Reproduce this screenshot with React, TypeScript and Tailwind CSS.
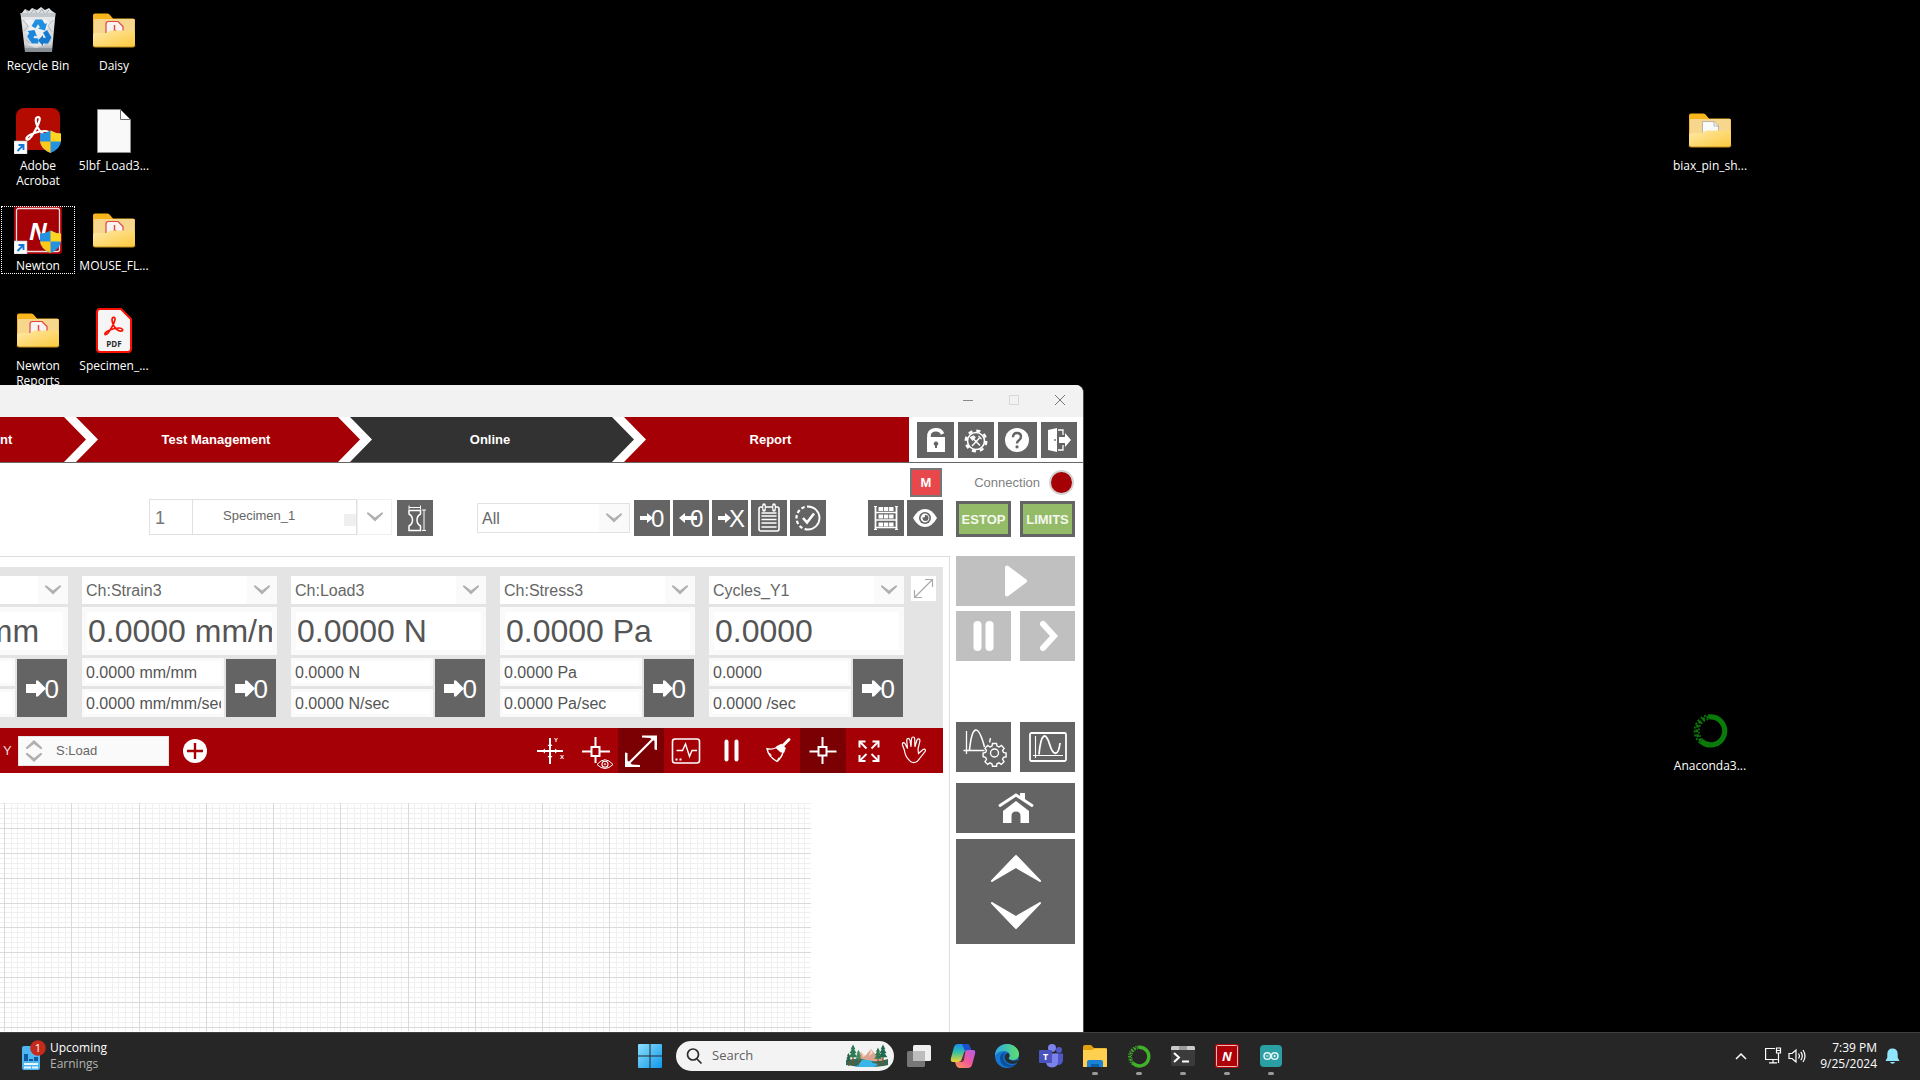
import React, { ReactNode } from "react";

/* ---------- desktop icons ---------- */

function RecycleBin() {
  return (
    <svg width="48" height="48" viewBox="0 0 48 48">
      <defs>
        <linearGradient id="bin" x1="0" y1="0" x2="0" y2="1">
          <stop offset="0" stopColor="#e9ebec" />
          <stop offset=".8" stopColor="#cfd2d5" />
          <stop offset="1" stopColor="#8b9096" />
        </linearGradient>
      </defs>
      <path d="M7 8l4-5 4 2 3-3 5 2 4-3 4 3 4-2 3 3 3 2-2 5H8z" fill="#dfe2e4" />
      <path d="M12 4l4 5 4-6 4 6 4-6 3 6 4-5" stroke="#a4abb0" strokeWidth="1" fill="none" />
      <path d="M6.500 7h35L38 46H11z" fill="url(#bin)" />
      <path d="M6.500 7h35l-.4 4H7z" fill="#b8bec3" opacity=".8" />
      <path d="M10 15l6 5-4 7 7 4-5 8 8 3 8-3 6-8-4-6 5-7-6-5-8 4-7-4z" fill="#fff" opacity=".5" />
      <path d="M9 14l5 6-4 5M39 14l-5 6 4 6M12 34l5 4M36 34l-4 5" stroke="#b4babf" fill="none" />
      <path d="M11 42h27l-.5 4h-26z" fill="#858b92" opacity=".8" />
      <path d="M17.500 20l4-6.500h6.500l3 4.500 2-1-2 7.500-7-2 2-1.300-2-3-2.500 4z" fill="#1f8fe0" />
      <path d="M13.500 25l7-1 2.500 6.500-2.300-1-1.400 2.500 5 .5v5h-6.500l-4.500-7 1.800-3.500z" fill="#1b86dc" />
      <path d="M33 24l4.500 7.500-3.500 6h-5V40l-5-5.500 5-5.500v2.700h3l-3-5z" fill="#1479d0" />
    </svg>
  );
}

function Folder({ kind }: { kind: "pdf" | "doc" }) {
  return (
    <svg width="48" height="48" viewBox="0 0 48 48">
      <defs>
        <linearGradient id="folderFront" x1="0" y1="0" x2="1" y2="1">
          <stop offset="0" stopColor="#ffe9a8" />
          <stop offset="1" stopColor="#fbc93d" />
        </linearGradient>
      </defs>
      <path d="M3 9.500Q3 7.500 5 7.500h12q1.500 0 2.500 1l3.500 4h20q2 0 2 2V36H3z" fill="#f8b51c" />
      <path d="M4 13h40.500v24H4z" fill="#f7d68d" />
      {kind === "pdf" ? (
        <g>
          <path d="M16 30V18q0-2.500 2.500-2.500H28l5 5V30z" fill="#f6f4f2" stroke="#e8433a" strokeWidth="1.200" />
          <path d="M24.500 19v5l-3 5M24.500 24l4 3" stroke="#e8433a" strokeWidth="1.400" fill="none" />
        </g>
      ) : (
        <g>
          <path d="M16.500 30V15.500H28l4.500 4.500v10z" fill="#fafafa" stroke="#a9a69c" strokeWidth=".8" />
          <path d="M28 15.500V20h4.500" fill="none" stroke="#a9a69c" strokeWidth=".8" />
        </g>
      )}
      <path d="M3 29q0-2 2-2h10.500q1.500 0 2.500-1l1-.8q1-.7 2.500-.7H43q2 0 2 2V39q0 2-2 2H5q-2 0-2-2z" fill="url(#folderFront)" />
      <path d="M3 39q0 2 2 2h38q2 0 2-2" stroke="#c98f1b" fill="none" />
    </svg>
  );
}

function AcrobatMark({ color }: { color: string }) {
  return (
    <path
      d="M24 11c-3.500 0-2.500 6 0 11 2 4 6 7 9.500 7 4 0 2.500-4-2.500-4-7 0-17 3.500-18.500 7-.8 2.500 2.500 2 4.500-1 3.500-5 7.500-12 8.500-16.500.6-2.500-.2-3.500-1.500-3.500z"
      fill="none"
      stroke={color}
      strokeWidth="2.200"
    />
  );
}

function ShieldAndArrow() {
  return (
    <g>
      <path d="M36.500 24.500q5 3 10.500 3v7q0 8-10.500 12.500Q26 42.500 26 34.500v-7q5.500 0 10.500-3z" fill="#2492e0" />
      <path d="M36.500 24.500q5 3 10.500 3V35.500H36.500z" fill="#ffd51f" />
      <path d="M36.500 35.500V47Q27 43 26 35.500z" fill="#ffc91a" />
      <path d="M0 35h13v13H0z" fill="#fdfdfd" stroke="#bcbcbc" strokeWidth=".6" />
      <path d="M3.500 45l5-5M4.500 39h5v5" stroke="#1279d8" strokeWidth="1.900" fill="none" />
    </g>
  );
}

function Acrobat() {
  return (
    <svg width="48" height="48" viewBox="0 0 48 48">
      <rect x="2" y="2" width="44" height="42" rx="8" fill="#b30b00" />
      <AcrobatMark color="#fff" />
      <ShieldAndArrow />
    </svg>
  );
}

function Newton() {
  return (
    <svg width="48" height="48" viewBox="0 0 48 48">
      <rect width="48" height="48" rx="3" fill="#a50005" />
      <rect x="2.500" y="2.500" width="43" height="43" rx="2" fill="none" stroke="#f0dcdc" strokeWidth="1.300" />
      <text x="24" y="34" textAnchor="middle" fontSize="24" fontWeight="700" fontStyle="italic" fontFamily="Open Sans, sans-serif" fill="#fff">N</text>
      <ShieldAndArrow />
    </svg>
  );
}

function BlankFile() {
  return (
    <svg width="48" height="48" viewBox="0 0 48 48">
      <path d="M7.500 3.500h23l10 10v33h-33z" fill="#f9f9f9" stroke="#8b8b8b" />
      <path d="M30.500 3.500v10h10z" fill="#fff" stroke="#6d6d6d" />
    </svg>
  );
}

function PdfFile() {
  return (
    <svg width="48" height="48" viewBox="0 0 48 48">
      <path d="M10 3h21l10 10v30q0 3-3 3H10q-3 0-3-3V6q0-3 3-3z" fill="#f5f5f5" stroke="#fa0f00" strokeWidth="2" />
      <g transform="translate(5.500 3) scale(.76)">
        <AcrobatMark color="#fa0f00" />
      </g>
      <text x="24" y="41" textAnchor="middle" fontSize="8" fontWeight="700" fontFamily="Open Sans, sans-serif" fill="#2c2c2c">PDF</text>
    </svg>
  );
}

function Anaconda({ size, color }: { size: number; color: string }) {
  return (
    <svg width={size} height={size} viewBox="0 0 48 48">
      <path d="M23 11a14 14 0 1 1-8 24" fill="none" stroke={color} strokeWidth="5.200" />
      <path d="M15 35a14 14 0 0 1 8-24" fill="none" stroke={color} strokeWidth="2.600" strokeDasharray="3 1.800" />
      <path d="M14 37a16 16 0 0 1 9-28" fill="none" stroke={color} strokeWidth="1.600" strokeDasharray="2.200 1.800" />
      <path d="M16.500 33.500a12 12 0 0 1 6.500-20.500" fill="none" stroke={color} strokeWidth="1.600" strokeDasharray="1.800 1.600" />
    </svg>
  );
}

function DesktopIcon({ place, label, children, focused }: { place: string; label: string; children: ReactNode; focused?: boolean }) {
  return (
    <button className={`absolute flex w-[76px] flex-col items-center pt-[6px] text-center ${place}`}>
      {focused && <span className="absolute inset-x-px top-[6px] h-[68px] border border-dotted border-white" />}
      {children}
      <span className="mt-[4px] w-[76px] text-[12px] leading-[15px] text-white">{label}</span>
    </button>
  );
}

/* ---------- shared window pieces ---------- */

function Chevron() {
  return (
    <svg width="16" height="10" viewBox="0 0 16 10">
      <path d="M0 .5h1.500L8 5.500l6.500-5H16v1.200L8 9.500 0 1.700z" fill="#b0b0b0" />
    </svg>
  );
}

function Picker({ label, value, className }: { label: string; value: string; className: string }) {
  return (
    <span className={`relative flex bg-white ${className}`}>
      <select aria-label={label} className="w-full appearance-none bg-transparent pt-[2px] pl-1 text-[16px] text-[#666]">
        <option>{value}</option>
      </select>
      <span className="pointer-events-none absolute inset-y-0 right-0 flex w-[30px] items-center justify-center bg-[#fafafa]">
        <Chevron />
      </span>
    </span>
  );
}

function Tile({ label, className, children }: { label: string; className: string; children: ReactNode }) {
  return (
    <button aria-label={label} className={`flex shrink-0 items-center justify-center text-white ${className}`}>
      {children}
    </button>
  );
}

function SmallZero({ variant }: { variant: "tare" | "untare" | "clear" }) {
  return (
    <svg width="36" height="36" viewBox="0 0 36 36" fill="#fff" fontFamily="Liberation Sans, Arial, sans-serif">
      {variant === "untare" ? (
        <path d="M6 18l6-5v3h12v4H12v3z" />
      ) : (
        <path d="M6 16h7v-3l6 5-6 5v-3H6z" />
      )}
      <text x="17" y="27" fontSize="24">{variant === "clear" ? "X" : "0"}</text>
    </svg>
  );
}

function BigZero() {
  return (
    <svg width="50" height="58" viewBox="0 0 50 58" fill="#fff" fontFamily="Liberation Sans, Arial, sans-serif">
      <path d="M9 25h10v-3.500h2l8 8-8 8h-2V34H9z" />
      <text x="27.500" y="39" fontSize="26">0</text>
    </svg>
  );
}

/* ---------- navigation ---------- */

function Step({ label, active, width, first, last }: { label: string; active?: boolean; width: string; first?: boolean; last?: boolean }) {
  const shape = first
    ? "[clip-path:polygon(0_0,calc(100%-22px)_0,100%_50%,calc(100%-22px)_100%,0_100%)]"
    : last
      ? "[clip-path:polygon(0_0,100%_0,100%_100%,0_100%,22px_50%)]"
      : "[clip-path:polygon(0_0,calc(100%-22px)_0,100%_50%,calc(100%-22px)_100%,0_100%,22px_50%)]";
  return (
    <button
      className={`h-[45px] text-[13px] font-bold text-white ${width} ${shape} ${active ? "bg-[#323232]" : "bg-[#a50005]"} ${first ? "text-left" : "-ml-[10px] text-center"} ${last ? "pl-[8px]" : first ? "" : "pr-[4px]"}`}
    >
      {label}
    </button>
  );
}

function HeaderIcons() {
  return (
    <div className="flex items-center gap-[4px] pl-[8px]">
      <Tile label="Unlock" className="h-[36px] w-[37px] bg-[#646464]">
        <svg width="36" height="36" viewBox="0 0 36 36">
          <path d="M11 15v-2.500a7 6 0 0 1 13.500-.5" fill="none" stroke="#fff" strokeWidth="3.600" />
          <path d="M9 15h18v15H9z" fill="#fff" />
          <path d="M18 19.500a2.200 2.200 0 0 1 1 4.200V26h-2v-2.300a2.200 2.200 0 0 1 1-4.200z" fill="#646464" />
        </svg>
      </Tile>
      <Tile label="Settings" className="h-[36px] w-[36px] bg-[#646464]">
        <svg width="36" height="36" viewBox="0 0 36 36" fill="none" stroke="#fff">
          <circle cx="18" cy="19" r="8.500" strokeWidth="1.600" />
          <circle cx="18" cy="19" r="10.300" strokeWidth="2.400" strokeDasharray="4.090 4" />
          <path d="M14 24l7.500-8M14.500 16l7.500 7.500" strokeWidth="1.500" />
          <path d="M12.500 15.500l3-1.500 1.500 1.500-2.500 2.500zM20.500 14l3 3" strokeWidth="1.200" fill="#fff" />
        </svg>
      </Tile>
      <Tile label="Help" className="h-[36px] w-[39px] bg-[#646464]">
        <svg width="26" height="26" viewBox="0 0 26 26">
          <circle cx="12" cy="13" r="12" fill="#fff" />
          <path d="M8 10.200Q8 6 12 6t4 3.800q0 2-2 3.400-2 1.300-2 3.300" fill="none" stroke="#646464" strokeWidth="2.400" />
          <circle cx="12" cy="19.800" r="1.600" fill="#646464" />
        </svg>
      </Tile>
      <Tile label="Exit" className="h-[36px] w-[36px] bg-[#646464]">
        <svg width="36" height="36" viewBox="0 0 36 36">
          <path d="M7 8l9-2v24l-9-2z" fill="#fff" />
          <path d="M17 8h5v5M17 28h5v-5" fill="none" stroke="#fff" strokeWidth="1.300" />
          <path d="M18 15h6v-4l6 7-6 7v-4h-6z" fill="#fff" />
          <circle cx="14" cy="18" r=".9" fill="#646464" />
        </svg>
      </Tile>
    </div>
  );
}

/* ---------- channel read-outs ---------- */

const channels = [
  { name: "Ch:Position3", value: "0.0000 mm", rate: "0.0000 mm" },
  { name: "Ch:Strain3", value: "0.0000 mm/mm", rate: "0.0000 mm/mm/sec" },
  { name: "Ch:Load3", value: "0.0000 N", rate: "0.0000 N/sec" },
  { name: "Ch:Stress3", value: "0.0000 Pa", rate: "0.0000 Pa/sec" },
  { name: "Cycles_Y1", value: "0.0000", rate: "0.0000 /sec" },
];

function Channel({ name, value, rate }: { name: string; value: string; rate: string }) {
  const small = "h-[28px] w-full border-[3px] border-[#fafafa] bg-white pt-px pl-px text-[16px] text-[#555]";
  return (
    <div className="flex w-[195px] shrink-0 flex-col gap-[3px]">
      <Picker label="Channel" value={name} className="h-[28px]" />
      <input readOnly aria-label={`${name} value`} value={value} className="h-[48px] w-full border-[5px] border-[#fafafa] bg-white pl-px text-[32px] leading-[36px] text-[#555]" />
      <div className="flex gap-[2px]">
        <div className="flex w-[142px] flex-col gap-[3px]">
          <input readOnly aria-label={`${name} peak`} value={value} className={small} />
          <input readOnly aria-label={`${name} rate`} value={rate} className={small} />
        </div>
        <Tile label={`Zero ${name}`} className="mt-px h-[58px] w-[50px] bg-[#646464]">
          <BigZero />
        </Tile>
      </div>
    </div>
  );
}

/* ---------- chart toolbar ---------- */

const Ico = ({ children }: { children: ReactNode }) => (
  <svg width="44" height="44" viewBox="0 0 44 44" fill="none" stroke="#fff" strokeWidth="2">
    {children}
  </svg>
);

const chartTools: { label: string; on?: boolean; icon: ReactNode }[] = [
  {
    label: "Axes cursor",
    icon: (
      <Ico>
        <path d="M22 9v26M9 22h26" />
        <path d="M19.500 17h5l-2.500-3zM19.500 27h5L22 30zM17 19.500v5L14 22zM27 19.500v5l3-2.500z" fill="#fff" stroke="none" />
        <g stroke="none" fill="#fff" fontSize="6" fontWeight="700" fontFamily="Liberation Sans, sans-serif">
          <text x="26" y="13">Y</text>
          <text x="32" y="30">X</text>
        </g>
      </Ico>
    ),
  },
  {
    label: "Cursor view",
    icon: (
      <Ico>
        <path d="M22.500 8v10M22.500 27v7M9 22.500h9M27 22.500h10" />
        <path d="M18.500 18h8v9h-8z" />
        <path d="M24 35.500q8-9.500 16 0-8 8-16 0z" strokeWidth="1" />
        <circle cx="32" cy="35.200" r="3" strokeWidth="1.100" />
        <circle cx="32" cy="35.200" r=".7" strokeWidth=".8" />
      </Ico>
    ),
  },
  {
    label: "Autoscale",
    on: true,
    icon: (
      <Ico>
        <path d="M9 35L35 9" strokeWidth="2.200" />
        <path d="M23 6.500h15V21l-2.500-.500V12L31 9l-8-.500zM6 23.500v14.500h15v-2l-8-.500-4.500-4L8.500 24z" fill="#fff" stroke="none" />
      </Ico>
    ),
  },
  {
    label: "Monitor",
    icon: (
      <Ico>
        <rect x="8.500" y="10" width="27" height="24" rx="2.500" strokeWidth="1.600" />
        <path d="M12.500 21.500h6l3-6.500 4 12.500 2.500-6h5" strokeWidth="1.400" />
        <path d="M11.500 30.500h2M15.500 30.500h2" />
      </Ico>
    ),
  },
  {
    label: "Pause chart",
    icon: (
      <Ico>
        <path d="M16.500 12.500v18M26.500 12.500v18" strokeWidth="4" strokeLinecap="round" />
      </Ico>
    ),
  },
  {
    label: "Clear chart",
    icon: (
      <Ico>
        <path d="M33 10.500l-5.500 5.500" strokeWidth="3" strokeLinecap="round" />
        <path d="M20.500 17.500l5-2.500 4 4-1.500 4.500-3.500-.5-4-3.500z" fill="#fff" strokeWidth=".6" />
        <path d="M20.500 18.500q-4.500 2.500-9.500 1.200 1.500 8.300 10 12.800 5-4.500 6-9.500" strokeWidth="1.400" />
        <path d="M13.500 24l2 2.500M21 32l2-3.500" strokeWidth="1" />
      </Ico>
    ),
  },
  {
    label: "Crosshair",
    on: true,
    icon: (
      <Ico>
        <path d="M21.500 8v10M21.500 27v8M8.500 22.500h9M26 22.500h9.500" />
        <path d="M17.500 18h8v8.500h-8z" />
      </Ico>
    ),
  },
  {
    label: "Fit",
    icon: (
      <Ico>
        <path d="M12.500 18.500v-6h6M25.500 12.500h6v6M31.500 26v6h-6M18.500 32h-6v-6" strokeWidth="2" />
        <path d="M13 13l6.500 6.500M31 13l-6.500 6.500M31 31.500L24.500 25M13 31.500l6.500-6.500" strokeWidth="1.800" />
      </Ico>
    ),
  },
  {
    label: "Pan",
    icon: (
      <Ico>
        <path
          d="M17 31q-4-4-4.500-9.500l-2-5.500q-.5-2 1-2.300 1.200 0 2 1.800l2 4-.8-8q0-2 1.500-2.200 1.500 0 1.800 2l1 6.500.5-8q.3-1.800 1.700-1.800t1.500 1.800l.2 8 2-6.500q.5-1.800 2-1.400 1.300.5 1 2.200L26 20l.5 4.500 4.500-4q1.500-.8 2.300.2.500 1-.5 2.100L28 29q-3 5-7 4.500-2.500-.2-4-2.500z"
          strokeWidth="1.200"
        />
      </Ico>
    ),
  },
];

function ChartGrid() {
  const width = 811;
  const height = 228;
  const cols = Array.from({ length: 121 }, (_, i) => ({ at: Math.round(4 + i * 6.725), major: i % 10 === 0 })).filter((l) => l.at < width);
  const rows = Array.from({ length: 46 }, (_, i) => ({ at: Math.round(i * 4.975), major: i % 5 === 0 && i > 0 })).filter((l) => l.at < height);
  return (
    <svg width={width} height={height} viewBox={`0 0 ${width} ${height}`}>
      {[false, true].map((major) => (
        <g key={String(major)} fill={major ? "#dadada" : "#f0f0f0"}>
          {cols.filter((l) => l.major === major).map((l) => (
            <rect key={`c${l.at}`} x={l.at} y="0" width="1" height={height} />
          ))}
          {rows.filter((l) => l.major === major).map((l) => (
            <rect key={`r${l.at}`} x="0" y={l.at} width={width} height="1" />
          ))}
        </g>
      ))}
    </svg>
  );
}

/* ---------- right hand control column ---------- */

function Controls() {
  return (
    <div className="flex flex-1 flex-col border-l border-[#dedede] pr-[8px] pl-[6px]">
      <Tile label="Play" className="h-[50px] w-full bg-[#c0c0c0]">
        <svg width="30" height="34" viewBox="0 0 30 34">
          <path d="M6 3.500v27L24 17z" fill="#fff" stroke="#fff" strokeWidth="4" strokeLinejoin="round" />
        </svg>
      </Tile>
      <div className="mt-[5px] flex justify-between">
        <Tile label="Pause" className="h-[50px] w-[55px] bg-[#c0c0c0]">
          <svg width="24" height="32" viewBox="0 0 24 32" stroke="#fff" strokeWidth="8" strokeLinecap="round">
            <path d="M5.500 5v22M17.500 5v22" />
          </svg>
        </Tile>
        <Tile label="Next" className="h-[50px] w-[55px] bg-[#c0c0c0]">
          <svg width="24" height="32" viewBox="0 0 24 32" stroke="#fff" strokeWidth="6" strokeLinecap="round" fill="none">
            <path d="M7 4l11 12L7 28" />
          </svg>
        </Tile>
      </div>
      <div className="mt-[61px] flex justify-between">
        <Tile label="Graph settings" className="h-[50px] w-[55px] bg-[#646464]">
          <svg width="50" height="44" viewBox="0 0 50 44" fill="none" stroke="#fff">
            <path d="M7.500 6v23M4.500 25.500h21" strokeWidth="1.300" />
            <path d="M10.500 25C13 0 19-2 25.500 22" strokeWidth="1.600" />
            <circle cx="35.500" cy="28" r="4" strokeWidth="1.400" />
            <path d="M33.500 18.500h4l.6 2.600 2 .9 2.300-1.500 2.700 2.800-1.500 2.200.9 2 2.600.5v3.800l-2.600.5-.9 2 1.400 2.400-2.700 2.700-2.300-1.500-2 .9-.5 2.500h-4l-.6-2.500-2-.9-2.200 1.500-2.700-2.700 1.500-2.400-1-2-2.400-.5v-3.800l2.500-.5.9-2-1.500-2.200 2.700-2.800 2.300 1.500 2-.9zM31.500 13l-1 4.500" strokeWidth="1.400" />
          </svg>
        </Tile>
        <Tile label="Graph" className="h-[50px] w-[55px] bg-[#646464]">
          <svg width="42" height="34" viewBox="0 0 42 34" fill="none" stroke="#fff">
            <rect x="3" y="3" width="36" height="28" rx="1.500" strokeWidth="1.800" />
            <path d="M8.500 6v22M6 25.500h30" strokeWidth="1.100" />
            <path d="M12 24.500C14 2 19 2 22.500 14c4 13 9 12 10.500-1" strokeWidth="1.800" />
          </svg>
        </Tile>
      </div>
      <Tile label="Home" className="mt-[11px] h-[50px] w-full bg-[#646464]">
        <svg width="36" height="34" viewBox="0 0 36 34" fill="#fff">
          <path d="M18 10l13 10v12h-8.500v-7q0-4.500-4.500-4.500t-4.500 4.500v7H5V20z" />
          <path d="M2 14.500L18 4l16 10.500" fill="none" stroke="#fff" strokeWidth="2.800" strokeLinecap="round" />
          <path d="M22 2h5v8l-5-3z" />
        </svg>
      </Tile>
      <div className="mt-[6px] flex h-[105px] flex-col items-center justify-center gap-[18px] bg-[#646464]">
        <button aria-label="Jog up">
          <svg width="52" height="29" viewBox="0 0 52 29">
            <path d="M26 2L2 27l24-14 24 14z" fill="#fff" stroke="#fff" strokeWidth="2" strokeLinejoin="round" />
          </svg>
        </button>
        <button aria-label="Jog down">
          <svg width="52" height="29" viewBox="0 0 52 29">
            <path d="M26 27L2 2l24 14L50 2z" fill="#fff" stroke="#fff" strokeWidth="2" strokeLinejoin="round" />
          </svg>
        </button>
      </div>
    </div>
  );
}

/* ---------- application window ---------- */

function Toolbar() {
  const small = "h-[36px] w-[36px] bg-[#646464]";
  return (
    <div className="h-[93px] pt-[5px]">
      <div className="flex justify-end pr-[7px]">
        <button className="h-[29px] w-[32px] border-2 border-[#777] bg-[#e8484c] text-[13px] font-bold text-white">M</button>
      </div>
      <div className="mt-[3px] flex items-center pr-[6px] pl-[149px]">
        <input readOnly aria-label="Specimen number" value="1" className="-mt-[2px] h-[36px] w-[44px] border border-[#e0e0e0] bg-white pt-[2px] pl-[5px] text-[18px] text-[#777]" />
        <div className="relative -mt-[2px] -ml-px">
          <input readOnly aria-label="Specimen name" value="Specimen_1" className="h-[36px] w-[165px] border border-[#e0e0e0] bg-white pb-[3px] pl-[30px] text-[13px] text-[#666]" />
          <span className="absolute right-px bottom-[9px] h-[12px] w-[12px] bg-[#efefef]" />
        </div>
        <Tile label="Specimen list" className="-mt-[2px] h-[36px] w-[35px] border border-[#f0f0f0] bg-white">
          <Chevron />
        </Tile>
        <Tile label="Specimen geometry" className={`ml-[5px] ${small}`}>
          <svg width="36" height="36" viewBox="0 0 36 36" fill="none" stroke="#fff" strokeWidth="1">
            <path d="M12 10.500h11.500V14q-3.500 2-3.500 6t3.500 6v4.500H12V26q3.500-2 3.500-6T12 14z" strokeWidth="1.500" />
            <path d="M12 7.500h11.500M12 5.500v4M23.500 5.500v4M27 10v20M25 10h4M25 30.500h4" />
          </svg>
        </Tile>
        <Picker label="Filter" value="All" className="ml-[44px] h-[30px] w-[153px] border border-[#e2e2e2]" />
        <div className="ml-[4px] flex gap-[3px]">
          <Tile label="Tare" className={small}><SmallZero variant="tare" /></Tile>
          <Tile label="Remove tare" className={small}><SmallZero variant="untare" /></Tile>
          <Tile label="Clear" className={small}><SmallZero variant="clear" /></Tile>
          <Tile label="Log" className={small}>
            <svg width="36" height="36" viewBox="0 0 36 36" fill="none" stroke="#fff">
              <rect x="8" y="7" width="20" height="24" rx="2" strokeWidth="1.600" />
              <path d="M13 5v5M23 5v5" strokeWidth="3.600" strokeLinecap="round" />
              <path d="M13 5.500v4M23 5.500v4" stroke="#646464" strokeWidth="1.400" />
              <path d="M10.500 13h15M10.500 16h15M10.500 19.500h15M10.500 23h15M10.500 27h15" strokeWidth="1.500" />
            </svg>
          </Tile>
          <Tile label="Approve" className={small}>
            <svg width="36" height="36" viewBox="0 0 36 36" fill="none" stroke="#fff">
              <path d="M18 6.500a11.500 11.500 0 0 1 0 23" strokeWidth="1.800" />
              <path d="M18 29.500a11.500 11.500 0 0 1 0-23" strokeWidth="2.200" strokeDasharray="3.500 2.300" />
              <path d="M13 18l4 4.500 7-9" strokeWidth="2.600" />
            </svg>
          </Tile>
        </div>
        <div className="ml-auto flex gap-[3px]">
          <Tile label="Rack" className={small}>
            <svg width="36" height="36" viewBox="0 0 36 36" fill="none" stroke="#fff">
              <path d="M7.500 6v24M28.500 6v24" strokeWidth="1.800" />
              <path d="M6 6.500h3M27 6.500h3M6 29.500h3M27 29.500h3" strokeWidth="1.200" />
              <path d="M8 12.500h20M8 20h20M8 27.500h20" strokeWidth="1.500" />
              <path d="M10.500 9h15M10.500 16.500h15M10.500 24.500h15" strokeWidth="4" strokeDasharray="4.500 .8" />
            </svg>
          </Tile>
          <Tile label="Show" className={small}>
            <svg width="36" height="36" viewBox="0 0 36 36">
              <path d="M6 18Q11 9 18 9t12 9q-5 9-12 9T6 18z" fill="#fff" />
              <circle cx="18" cy="18" r="6" fill="#646464" />
              <circle cx="18" cy="18" r="4.400" fill="#fff" />
              <circle cx="18.500" cy="18" r="3" fill="#646464" />
              <circle cx="16.500" cy="16" r="1.500" fill="#fff" />
            </svg>
          </Tile>
        </div>
      </div>
    </div>
  );
}

function ChartBar() {
  return (
    <div className="mr-[6px] flex h-[45px] items-center bg-[#a50005]">
      <label htmlFor="y-axis" className="w-[18px] pl-[3px] text-[13px] text-[#f2dada]">Y</label>
      <div className="flex h-[30px] w-[151px] items-center border border-[#e6e6e6] bg-[#fafafa] pl-[7px]">
        <svg width="16" height="22" viewBox="0 0 16 22" fill="#b0b0b0">
          <path d="M8 0l8 7.500V9h-1.500L8 4 1.500 9H0V7.500zM8 22l8-7.500V13h-1.500L8 18l-6.500-5H0v1.500z" />
        </svg>
        <input id="y-axis" readOnly value="S:Load" className="ml-[14px] w-[100px] bg-transparent pt-px text-[13px] text-[#666]" />
      </div>
      <button aria-label="Add axis" className="ml-[13px]">
        <svg width="26" height="26" viewBox="0 0 26 26">
          <circle cx="13" cy="13" r="12" fill="#fff" />
          <path d="M13 5v16M5 13h16" stroke="#a50005" strokeWidth="2.400" />
        </svg>
      </button>
      <div className="mr-[6px] ml-auto grid w-[410px] grid-cols-9">
        {chartTools.map((t) => (
          <button key={t.label} aria-label={t.label} className={`flex h-[45px] items-center justify-center ${t.on ? "bg-[#7b0003]" : ""}`}>
            {t.icon}
          </button>
        ))}
      </div>
    </div>
  );
}

function AppWindow() {
  return (
    <section className="absolute top-[385px] bottom-0 left-0 flex w-[1084px] flex-col overflow-hidden rounded-tr-[8px] border-r border-[#4a4a4a] bg-white font-['Liberation_Sans',Arial,sans-serif]">
      <header className="flex h-[32px] shrink-0 justify-end bg-[#f2f2f2] pb-[2px]">
        <button aria-label="Minimize" className="flex w-[46px] items-center justify-center">
          <svg width="10" height="10"><path d="M0 5.500h10" stroke="#888" /></svg>
        </button>
        <button aria-label="Maximize" className="flex w-[46px] items-center justify-center">
          <svg width="10" height="10"><rect x=".5" y=".5" width="9" height="9" fill="none" stroke="#d8d8d8" /></svg>
        </button>
        <button aria-label="Close" className="flex w-[46px] items-center justify-center">
          <svg width="10" height="10"><path d="M0 0l10 10M10 0L0 10" stroke="#777" /></svg>
        </button>
      </header>
      <nav className="flex h-[46px] shrink-0 border-b border-[#666]">
        <Step label="nt" width="w-[86px]" first />
        <Step label="Test Management" width="w-[284px]" />
        <Step label="Online" width="w-[284px]" active />
        <Step label="Report" width="w-[285px]" last />
        <HeaderIcons />
      </nav>
      <div className="flex min-h-0 flex-1">
        <main className="flex min-w-0 flex-1 flex-col">
          <Toolbar />
          <div className="border-t border-[#dedede] pt-[10px] pr-[6px]">
            <div className="flex items-start overflow-hidden bg-[#e4e4e4] pt-[9px] pb-[11px]">
              <div className="-ml-[127px] flex gap-[14px]">
                {channels.map((c) => (
                  <Channel key={c.name} {...c} />
                ))}
              </div>
              <Tile label="Expand channels" className="ml-[7px] h-[25px] w-[25px] bg-white">
                <svg width="21" height="21" viewBox="0 0 21 21" fill="none" stroke="#a8a8a8">
                  <path d="M2 19L19 2M12 1.500h7.500V9M1.500 12v7.500H9" strokeWidth="1.200" />
                </svg>
              </Tile>
            </div>
          </div>
          <ChartBar />
          <div className="min-h-0 flex-1 overflow-hidden pt-[30px]">
            <ChartGrid />
          </div>
        </main>
        <aside className="flex w-[134px] flex-col">
          <div className="h-[93px] pt-[6px] pr-[8px] pl-[7px]">
            <div className="flex h-[26px] items-center justify-end gap-[9px] pr-px">
              <span className="pt-px text-[13px] text-[#808080]">Connection</span>
              <span className="h-[25px] w-[25px] rounded-full border-2 border-[#d2d2d2] bg-[#a50005]" />
            </div>
            <div className="mt-[6px] flex justify-between">
              <button className="h-[36px] w-[55px] border-[3px] border-[#646464] bg-[#94bb67] pt-px text-[13px] font-bold text-[#f4f8ee]">ESTOP</button>
              <button className="h-[36px] w-[55px] border-[3px] border-[#646464] bg-[#94bb67] pt-px text-[13px] font-bold text-[#f4f8ee]">LIMITS</button>
            </div>
          </div>
          <Controls />
        </aside>
      </div>
    </section>
  );
}

/* ---------- taskbar ---------- */

function TaskButton({ label, running, children }: { label: string; running?: boolean; children: ReactNode }) {
  return (
    <button aria-label={label} className="relative flex h-[47px] w-[44px] items-center justify-center">
      {children}
      {running && <span className="absolute bottom-[4px] h-[3px] w-[6px] rounded-full bg-[#9a9a9a]" />}
    </button>
  );
}

function SearchArt() {
  const tree = (x: number, y: number, s: number, c: string) => (
    <g transform={`translate(${x} ${y}) scale(${s})`}>
      <path d="M-.8 0h1.600v24h-1.600z" fill="#8a4b2a" />
      <path d="M0-2l3 6H1.500l3 5H2l3.500 5h-11L-2 9h-2.500l3-5H-3z" fill={c} />
    </g>
  );
  return (
    <svg width="42" height="24" viewBox="0 0 42 24">
      <path d="M8 17l7-9 4 4 6-7 5 6 4-2 4 8z" fill="#dba58f" />
      <path d="M15 8l2 5 2-1zM25 5l-2 7 4-3z" fill="#f4d5c4" />
      <path d="M0 17q10-4 20-1t22-1v6q-8 2-20 2T0 21z" fill="#2f6b55" />
      <path d="M16 16h8l3 3 6 1-5 3H9l4-3z" fill="#38b6e8" />
      {tree(7, 2, 0.8, "#2f7a55")}
      {tree(12.500, 7, 0.6, "#3d8a5c")}
      {tree(2.500, 10, 0.5, "#276048")}
      {tree(32, 5, 0.7, "#2f7a55")}
      {tree(37, 2, 0.8, "#1f6b50")}
    </svg>
  );
}

function Taskbar() {
  return (
    <footer className="relative flex h-[48px] shrink-0 items-center justify-between border-t border-[#404040] bg-[#262626] pb-[2px] text-white">
      <button className="flex items-center gap-[4px] pl-[21px] text-left">
        <svg width="25" height="32" viewBox="0 0 25 32">
          <rect x="1" y="6" width="18" height="24" rx="2" fill="#4db5f0" />
          <path d="M3 14h4v7H3zM8 19h4v2H8zM13 17h4v4h-4z" fill="#0d5aa0" />
          <path d="M3 23h14v2H3zM3 26.500h7v2H3zM11 26.500h6v2h-6z" fill="#e8f6ff" />
          <circle cx="17" cy="8" r="7.800" fill="#c42b1c" />
          <text x="17" y="12" textAnchor="middle" fontSize="11" fill="#fff">1</text>
        </svg>
        <span className="text-[12px] leading-[16px]">
          <span className="block">Upcoming</span>
          <span className="block text-[#b4b4b4]">Earnings</span>
        </span>
      </button>
      <div className="absolute top-0 bottom-[2px] left-[628px] flex items-center">
        <TaskButton label="Start">
          <svg width="24" height="24" viewBox="0 0 24 24">
            <defs>
              <linearGradient id="win" x1="0" y1="0" x2="1" y2="1">
                <stop offset="0" stopColor="#8be0fb" />
                <stop offset="1" stopColor="#0f97ec" />
              </linearGradient>
            </defs>
            <path d="M0 1q0-1 1-1h10.500v11.500H0zM12.500 0H23q1 0 1 1v10.500H12.500zM0 12.500h11.500V24H1q-1 0-1-1zM12.500 12.500H24V23q0 1-1 1H12.500z" fill="url(#win)" />
          </svg>
        </TaskButton>
        <label className="mr-[3px] ml-[4px] flex h-[30px] w-[218px] items-center rounded-full bg-[#f3f3f3] pr-[6px] pl-[9px]">
          <svg width="18" height="18" viewBox="0 0 18 18" fill="none" stroke="#2b2b2b" strokeWidth="1.700">
            <circle cx="8" cy="7.500" r="5.500" />
            <path d="M12 12l4.500 4.500" />
          </svg>
          <input placeholder="Search" aria-label="Search" className="ml-[9px] w-[134px] bg-transparent text-[13px] placeholder:text-[#606060]" />
          <SearchArt />
        </label>
        <TaskButton label="Task view">
          <svg width="24" height="24" viewBox="0 0 24 24">
            <rect x="6" y="1" width="18" height="16" rx="1.500" fill="#efefef" />
            <rect x="0" y="7" width="18" height="16" rx="1.500" fill="#777" />
            <path d="M6 7h12v10H6z" fill="#bdbdbd" />
          </svg>
        </TaskButton>
        <TaskButton label="Copilot">
          <svg width="26" height="26" viewBox="0 0 26 26">
            <defs>
              <linearGradient id="copA" x1="0" y1="0" x2="0" y2="1">
                <stop offset="0" stopColor="#1a8df0" />
                <stop offset=".45" stopColor="#2fc0a8" />
                <stop offset="1" stopColor="#f6d22c" />
              </linearGradient>
              <linearGradient id="copB" x1="1" y1="0" x2="0" y2="1">
                <stop offset="0" stopColor="#b05cf0" />
                <stop offset=".5" stopColor="#f2589a" />
                <stop offset="1" stopColor="#fb9a4c" />
              </linearGradient>
            </defs>
            <path d="M8 1h9q2 0 3 3l1 3h-4q-2 0-3 3l-2 6q-1 3-4 3H3q-3 0-2-4L4 4q1-3 4-3z" fill="url(#copA)" />
            <path d="M12 1h5q2 0 3 3l1 3h-4l-2 1z" fill="#1c4fd0" />
            <path d="M18 25H9q-2 0-3-3l-1-3h4q2 0 3-3l2-6q1-3 4-3h5q3 0 2 4l-3 11q-1 3-4 3z" fill="url(#copB)" />
            <path d="M11.500 17l3-8.500L15.500 8l-1.500 9q-.5 2-2.500 2h-2q1.500-.3 2-2z" fill="#262626" opacity=".75" />
          </svg>
        </TaskButton>
        <TaskButton label="Edge">
          <svg width="24" height="24" viewBox="0 0 24 24">
            <defs>
              <linearGradient id="edgeA" x1="0" y1="0" x2="1" y2="0">
                <stop offset="0" stopColor="#2aa8e8" />
                <stop offset="1" stopColor="#5fe06a" />
              </linearGradient>
            </defs>
            <circle cx="12" cy="12" r="12" fill="#1577cf" />
            <path d="M0 12C0 4 6 0 12 0c7 0 12 5 12 10 0 4-3 6-6.500 6-3 0-4.500-1.200-3.500-2.500C16 10 13 7 9 7c-5 0-8 3-9 5z" fill="url(#edgeA)" />
            <path d="M9 22q-4-3-4-8t6-6q-4 3-2 8 2.500 5 8 5 3 0 5-2-4 6-13 3z" fill="#0c4f9c" />
            <path d="M14 13.500q1.500-2-.5-4.500-4 0-4 4.500 1 6.500 8 6.500 3 0 5-2 1-2-.5-2-5 2-8-1-.7-.8 0-1.500z" fill="#262626" opacity=".9" />
          </svg>
        </TaskButton>
        <TaskButton label="Teams">
          <svg width="25" height="24" viewBox="0 0 25 24">
            <circle cx="20" cy="6" r="3" fill="#5058c8" />
            <circle cx="13" cy="4" r="4" fill="#7b83eb" />
            <path d="M16 9.500h8v7q-1 4.500-5 4.500t-4-3z" fill="#5058c8" />
            <path d="M7 9.500h12V17q0 6.500-6 6.500T7 17z" fill="#7b83eb" />
            <rect x="0" y="6" width="13" height="13" rx="1" fill="#4a52bd" />
            <text x="6.500" y="16" textAnchor="middle" fontSize="9" fontWeight="700" fill="#fff">T</text>
          </svg>
        </TaskButton>
        <TaskButton label="File Explorer" running>
          <svg width="24" height="22" viewBox="0 0 24 22">
            <path d="M0 2q0-2 2-2h6l3 3h11q2 0 2 2v4H0z" fill="#e0a010" />
            <path d="M0 5h9l2-1.500h13V22H0z" fill="#ffd04f" />
            <path d="M4 22v-5q0-2 2-2h12q2 0 2 2v5z" fill="#1b81d4" />
            <path d="M8 19h8v3H8z" fill="#0d5fa8" />
          </svg>
        </TaskButton>
        <TaskButton label="Anaconda" running>
          <Anaconda size={32} color="#43b02a" />
        </TaskButton>
        <TaskButton label="Terminal" running>
          <svg width="24" height="20" viewBox="0 0 24 20">
            <rect width="24" height="20" rx="1.500" fill="#3b3b3b" />
            <path d="M0 1.500Q0 0 1.500 0h21Q24 0 24 1.500V4H0z" fill="#c9c9c9" />
            <path d="M8 0h8v4H8z" fill="#999" />
            <path d="M3 7l5 4.500L3 16M11 15.500h7" fill="none" stroke="#fff" strokeWidth="2" />
          </svg>
        </TaskButton>
        <TaskButton label="Newton" running>
          <svg width="24" height="24" viewBox="0 0 24 24">
            <rect width="24" height="24" rx="1.500" fill="#b00008" />
            <rect x="1.500" y="1.500" width="21" height="21" rx="1" fill="none" stroke="#e8b8b8" />
            <text x="12" y="17" textAnchor="middle" fontSize="13" fontWeight="700" fontStyle="italic" fill="#fff">N</text>
          </svg>
        </TaskButton>
        <TaskButton label="Arduino" running>
          <svg width="22" height="22" viewBox="0 0 22 22">
            <rect width="22" height="22" rx="4" fill="#2a9fa4" />
            <g fill="none" stroke="#e4f5f5" strokeWidth="1.500">
              <circle cx="7.300" cy="11" r="3.300" />
              <circle cx="14.700" cy="11" r="3.300" />
              <path d="M6 11h2.600M13.400 11h2.600M14.700 9.700v2.600" strokeWidth="1" />
            </g>
          </svg>
        </TaskButton>
      </div>
      <div className="flex items-center pr-[20px]">
        <button aria-label="Show hidden icons">
          <svg width="12" height="8" viewBox="0 0 12 8"><path d="M1 7l5-5 5 5" fill="none" stroke="#fff" strokeWidth="1.500" /></svg>
        </button>
        <button aria-label="Network" className="ml-[17px]">
          <svg width="18" height="17" viewBox="0 0 18 17" fill="none" stroke="#fff" strokeWidth="1.200">
            <path d="M11 1.500H1.600v11h12M5 15.900h8M9 12.500v3M12.500 1h4v5h-4zM12.500 3.500h4M14.500 6v10" />
          </svg>
        </button>
        <button aria-label="Volume" className="ml-[6px]">
          <svg width="18" height="16" viewBox="0 0 18 16" fill="none" stroke="#fff" strokeWidth="1.200">
            <path d="M1 5.500h3L8 2v12l-4-3.500H1zM10.500 5.500q1.800 2.500 0 5M12.800 3.800q3 4.200 0 8.400M15 2q4 6 0 12" />
          </svg>
        </button>
        <button className="ml-[11px] w-[60px] text-right text-[12px] leading-[16px] whitespace-nowrap">
          <span className="block">7:39 PM</span>
          <span className="flex justify-end">9/25/2024</span>
        </button>
        <button aria-label="Notifications" className="ml-[8px]">
          <svg width="15" height="16" viewBox="0 0 15 16" fill="#90e6fc">
            <path d="M7.500.5q5 0 5.200 5.500v3.500l1.800 3.500H.5l1.800-3.500V6Q2.500.5 7.500.5zM5 14h5q-.5 1.800-2.500 1.800T5 14z" />
          </svg>
        </button>
      </div>
    </footer>
  );
}

export default function App() {
  return (
    <div className="flex h-screen flex-col overflow-hidden bg-black font-['Open_Sans','Noto_Sans',sans-serif]">
      <div className="relative min-h-0 flex-1">
        <DesktopIcon place="left-0 top-0" label="Recycle Bin"><RecycleBin /></DesktopIcon>
        <DesktopIcon place="left-[76px] top-0" label="Daisy"><Folder kind="pdf" /></DesktopIcon>
        <DesktopIcon place="left-0 top-[100px]" label="Adobe Acrobat"><Acrobat /></DesktopIcon>
        <DesktopIcon place="left-[76px] top-[100px]" label="5lbf_Load3..."><BlankFile /></DesktopIcon>
        <DesktopIcon place="left-0 top-[200px]" label="Newton" focused><Newton /></DesktopIcon>
        <DesktopIcon place="left-[76px] top-[200px]" label="MOUSE_FL..."><Folder kind="pdf" /></DesktopIcon>
        <DesktopIcon place="left-0 top-[300px]" label="Newton Reports"><Folder kind="pdf" /></DesktopIcon>
        <DesktopIcon place="left-[76px] top-[300px]" label="Specimen_..."><PdfFile /></DesktopIcon>
        <DesktopIcon place="right-[172px] top-[100px]" label="biax_pin_sh..."><Folder kind="doc" /></DesktopIcon>
        <DesktopIcon place="right-[172px] top-[700px]" label="Anaconda3..."><Anaconda size={48} color="#0a7a0a" /></DesktopIcon>
        <AppWindow />
      </div>
      <Taskbar />
    </div>
  );
}
